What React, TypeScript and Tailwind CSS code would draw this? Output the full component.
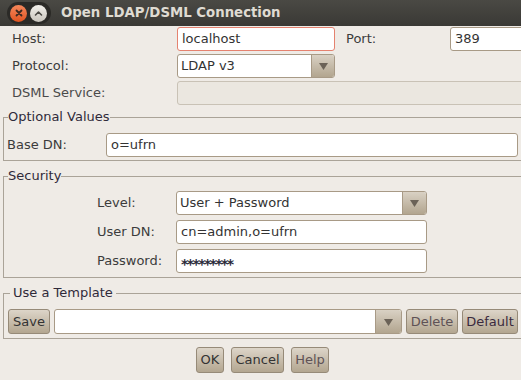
import React from "react";

const inputCls =
  "h-[24px] bg-white border border-[#a89a86] rounded-[3px] pl-[4px] flex items-center text-[13px] text-[#333] whitespace-nowrap overflow-hidden";
const btnCls =
  "h-full flex items-center justify-center rounded-[3px] border border-[#968a78] bg-gradient-to-b from-[#ddd5c9] to-[#b3a690] text-[13px] whitespace-nowrap";

function Arrow() {
  return (
    <svg width="9" height="8" viewBox="0 0 9 8">
      <polygon points="0,1 9,1 4.5,8" fill="#6b6257" />
    </svg>
  );
}

function Combo({ text, w, arrowW = 23 }: { text: string; w: string; arrowW?: number }) {
  return (
    <div className={`h-full ${w} flex border border-[#a89a86] rounded-[3px] overflow-hidden bg-white`}>
      <div className="flex-1 flex items-center pl-[3px] text-[13px] text-[#333] whitespace-nowrap">{text}</div>
      <div
        className="h-full flex items-center justify-center border-l border-[#a89a86] bg-gradient-to-b from-[#d9d1c4] to-[#b2a58f]"
        style={{ width: arrowW }}
      >
        <Arrow />
      </div>
    </div>
  );
}

function GroupHeader({ title, gap }: { title: string; gap: boolean }) {
  return (
    <div className="flex h-[16px]">
      <div className={`mt-[8px] border-t border-l border-[#aaa398] ${gap ? "w-[7px]" : "w-[5px]"}`} />
      <span className={`text-[13px] leading-[16px] text-[#2f2a3a] whitespace-nowrap ${gap ? "px-[3px]" : ""}`}>{title}</span>
      <div className="flex-1 mt-[8px] border-t border-[#aaa398]" />
    </div>
  );
}

export default function App() {
  return (
    <div className="w-[521px] h-[380px] overflow-hidden bg-[#efebe6] font-['DejaVu_Sans',sans-serif] text-[#3c3c3c] text-[13px]">
      {/* Title bar */}
      <div className="h-[26px] flex items-center bg-gradient-to-b from-[#4a4944] to-[#3a3935]">
        <div className="ml-[7px] h-[22px] w-[44px] rounded-full bg-[#2b2a27] flex items-center gap-[3px] pl-[3px]">
          <div className="w-[17px] h-[17px] rounded-full bg-gradient-to-b from-[#f5875a] to-[#e0531e] flex items-center justify-center">
            <svg width="8" height="8" viewBox="0 0 8 8">
              <path d="M1.5 1.5 L6.5 6.5 M6.5 1.5 L1.5 6.5" stroke="#3b2a22" strokeWidth="1.8" strokeLinecap="round" />
            </svg>
          </div>
          <div className="w-[17px] h-[17px] rounded-full bg-gradient-to-b from-[#f2f0eb] to-[#c9c5bd] flex items-center justify-center">
            <svg width="9" height="7" viewBox="0 0 9 7">
              <path d="M1.5 5 L4.5 2 L7.5 5" fill="none" stroke="#4a4843" strokeWidth="1.6" strokeLinecap="round" strokeLinejoin="round" />
            </svg>
          </div>
        </div>
        <span className="ml-[10px] text-[13.3px] font-bold text-[#dfdbd2] whitespace-nowrap">Open LDAP/DSML Connection</span>
      </div>

      {/* Top rows */}
      <div className="w-[560px] pt-[1px] pl-[12px] flex flex-col gap-[3px]">
        <div className="h-[24px] flex items-center">
          <span className="w-[165px]">Host:</span>
          <div className={`${inputCls} w-[158px] !border-[#e5826f]`}>localhost</div>
          <span className="ml-[11px] w-[104px]">Port:</span>
          <div className={`${inputCls} w-[100px]`}>389</div>
        </div>
        <div className="h-[24px] flex items-center">
          <span className="w-[165px]">Protocol:</span>
          <Combo text="LDAP v3" w="w-[158px]" />
        </div>
        <div className="h-[24px] flex items-center">
          <span className="w-[165px] text-[#4a4a4a]">DSML Service:</span>
          <div className="h-[24px] flex-1 border border-[#c9c2b6] rounded-[3px] bg-[#ebe7e0]" />
        </div>
      </div>

      {/* Optional Values */}
      <div className="mt-[4px] ml-[3px] w-[540px]">
        <GroupHeader title="Optional Values" gap={false} />
        <div className="border-l border-b border-[#aaa398] -mt-[8px] pt-[16px] pl-[3px] pb-[3px] flex items-center">
          <span className="w-[99px]">Base DN:</span>
          <div className={`${inputCls} w-[412px]`}>o=ufrn</div>
        </div>
      </div>

      {/* Security */}
      <div className="mt-[7px] ml-[3px] w-[540px]">
        <GroupHeader title="Security" gap={false} />
        <div className="border-l border-b border-[#aaa398] -mt-[8px] pt-[15px] pl-[93px] pb-[4px] flex flex-col gap-[5px]">
          <div className="h-[24px] flex items-center">
            <span className="w-[79px]">Level:</span>
            <Combo text="User + Password" w="w-[251px]" arrowW={24} />
          </div>
          <div className="h-[24px] flex items-center">
            <span className="w-[79px]">User DN:</span>
            <div className={`${inputCls} w-[251px]`}>cn=admin,o=ufrn</div>
          </div>
          <div className="h-[24px] flex items-center">
            <span className="w-[79px]">Password:</span>
            <div className={`${inputCls} w-[251px]`}>
              <span className="text-[14px] font-bold tracking-[-1.6px] translate-y-[3px] text-[#2a2a3a]">*********</span>
            </div>
          </div>
        </div>
      </div>

      {/* Use a Template */}
      <div className="mt-[7px] ml-[3px] w-[540px]">
        <GroupHeader title="Use a Template" gap={true} />
        <div className="border-l border-b border-[#aaa398] -mt-[8px] pt-[16px] pl-[4px] pb-[4px]">
          <div className="h-[25px] flex gap-[4px]">
            <div className={`${btnCls} w-[42px] text-[#333]`}>Save</div>
            <Combo text="" w="w-[348px]" arrowW={26} />
            <div className={`${btnCls} w-[52px] text-[#5e5256]`}>Delete</div>
            <div className={`${btnCls} w-[56px] text-[#3a2a3e]`}>Default</div>
          </div>
        </div>
      </div>

      {/* Bottom buttons */}
      <div className="mt-[8px] h-[26px] pl-[196px] flex gap-[7px]">
        <div className={`${btnCls} w-[28px] text-[#333]`}>OK</div>
        <div className={`${btnCls} w-[53px] text-[#333]`}>Cancel</div>
        <div className={`${btnCls} w-[38px] text-[#5e5256]`}>Help</div>
      </div>
    </div>
  );
}
